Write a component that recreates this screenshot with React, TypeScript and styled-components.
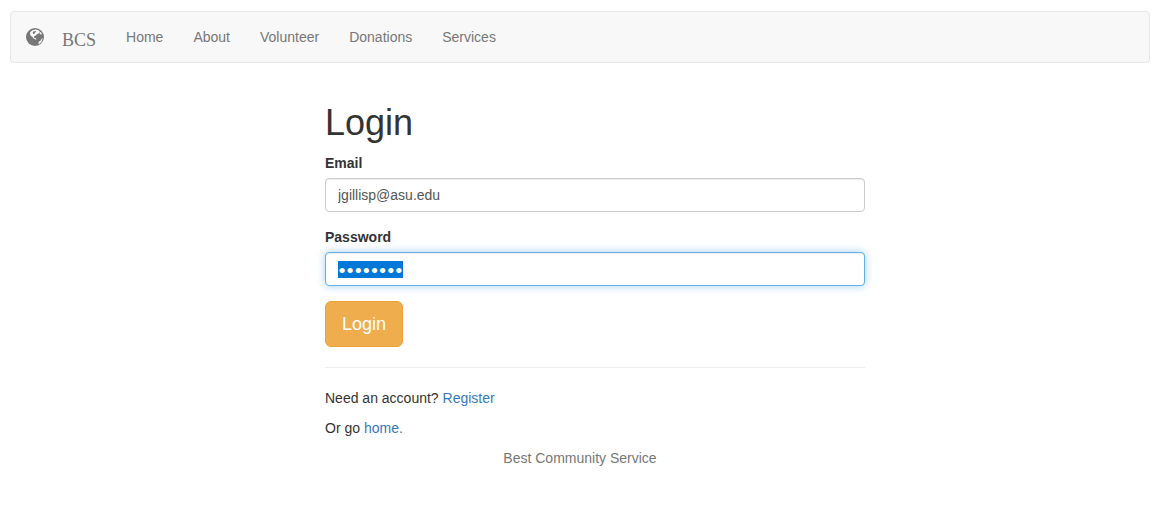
import React, { useEffect, useRef } from "react";
import styled, { createGlobalStyle } from "styled-components";

const GlobalStyle = createGlobalStyle`
  *, *::before, *::after { box-sizing: border-box; }
  body {
    margin: 0;
    background: #fff;
    color: #333;
    font: 14px/20px "Liberation Sans", Arial, sans-serif;
  }
`;

const Page = styled.div`
  padding: 11px 22px 0 10px;
`;

const Navbar = styled.nav`
  display: flex;
  flex-wrap: wrap;
  min-height: 52px;
  margin-bottom: 20px;
  border: 1px solid #e7e7e7;
  border-radius: 4px;
  background: #f8f8f8;
`;

const Brand = styled.a`
  display: flex;
  align-items: flex-start;
  gap: 18px;
  padding: 16px 15px 12px;
  color: #777;
  font-family: "Liberation Serif", "Times New Roman", serif;
  font-size: 18px;
  line-height: 20px;
  text-decoration: none;
`;

const BrandName = styled.span`
  padding-top: 2px;
`;

const NavList = styled.ul`
  display: flex;
  flex-wrap: wrap;
  margin: 0;
  padding: 0;
  list-style: none;
`;

const NavLink = styled.a`
  display: block;
  padding: 15px;
  color: #777;
  text-decoration: none;
`;

const Row = styled.main`
  display: grid;
  grid-template-columns: 1fr 2fr 1fr;
  margin: 0 -15px 0 15px;
`;

const Column = styled.div`
  grid-column: 2;
  padding: 20px 15px 0;
`;

const Title = styled.h1`
  margin: 0 0 10px;
  font-size: 36px;
  font-weight: 500;
  line-height: 40px;
`;

const Field = styled.div`
  margin-bottom: 15px;
`;

const Label = styled.label`
  display: block;
  margin-bottom: 5px;
  font-weight: 700;
`;

const Input = styled.input`
  display: block;
  width: 100%;
  height: 34px;
  padding: 6px 12px;
  border: 1px solid #ccc;
  border-radius: 4px;
  background: #fff;
  box-shadow: inset 0 1px 1px rgba(0, 0, 0, 0.075);
  color: #555;
  font: inherit;

  &:focus {
    border-color: #66afe9;
    outline: 0;
    box-shadow: inset 0 1px 1px rgba(0, 0, 0, 0.075), 0 0 8px rgba(102, 175, 233, 0.6);
  }

  &::selection {
    background: #0078d7;
    color: #fff;
  }
`;

const PasswordInput = styled(Input)`
  font-family: Lato, sans-serif;
`;

const SubmitButton = styled.button`
  display: block;
  height: 46px;
  padding: 10px 16px;
  border: 1px solid #eea236;
  border-radius: 6px;
  background: #f0ad4e;
  color: #fff;
  font: 18px/24px "Liberation Sans", Arial, sans-serif;
  cursor: pointer;
`;

const Divider = styled.hr`
  margin: 20px 0;
  border: 0;
  border-top: 1px solid #eee;
`;

const Text = styled.p`
  margin: 0 0 10px;
`;

const TextLink = styled.a`
  color: #337ab7;
  text-decoration: none;
`;

const Footer = styled.footer`
  color: #777;
  text-align: center;
`;

const navItems = ["Home", "About", "Volunteer", "Donations", "Services"];

function GlobeIcon() {
  return (
    <svg width="18" height="18" viewBox="0 0 18 18" aria-hidden="true">
      <circle cx="9" cy="9" r="9" fill="#777" />
      <path
        fill="#f8f8f8"
        d="M4.200 4 6.400 2.200l3-.8 2.600.5 1.700 1.300-.4 1.500-1 1.100-1.400.5-.9 1.200-1.600.4-.6 1.100.8 1 1.400.2.6 1.100-1.200.2-1.700-.9-1.300-1.600-1.700-1.200L4 6z"
      />
      <path fill="#f8f8f8" d="M13.600 3.400l1.500 1.200.9 1.700-1.300.1-1.200-1.200zM16 10.200l.6.600-.7 2.200-1.400 1.900-1.500 1-.8-.7.9-1.700 1.600-1.100z" />
      <path fill="#777" d="M7.200 3.500 9.600 3l.5 1-1.200.5-.4 1.200-1.300.2-.5-1.100z" />
    </svg>
  );
}

export default function App() {
  const passwordRef = useRef<HTMLInputElement>(null);

  useEffect(() => {
    passwordRef.current?.focus();
    passwordRef.current?.select();
  }, []);

  return (
    <>
      <GlobalStyle />
      <Page>
        <Navbar>
          <Brand href="#">
            <GlobeIcon />
            <BrandName>BCS</BrandName>
          </Brand>
          <NavList>
            {navItems.map((item) => (
              <li key={item}>
                <NavLink href={`#${item.toLowerCase()}`}>{item}</NavLink>
              </li>
            ))}
          </NavList>
        </Navbar>
        <Row>
          <Column>
            <Title>Login</Title>
            <form onSubmit={(event) => event.preventDefault()}>
              <Field>
                <Label htmlFor="email">Email</Label>
                <Input id="email" type="text" name="email" defaultValue="jgillisp@asu.edu" />
              </Field>
              <Field>
                <Label htmlFor="password">Password</Label>
                <PasswordInput
                  id="password"
                  type="password"
                  name="password"
                  defaultValue="password"
                  ref={passwordRef}
                />
              </Field>
              <SubmitButton type="submit">Login</SubmitButton>
            </form>
            <Divider />
            <Text>
              Need an account? <TextLink href="#register">Register</TextLink>
            </Text>
            <Text>
              Or go <TextLink href="#home">home.</TextLink>
            </Text>
          </Column>
        </Row>
        <Footer>Best Community Service</Footer>
      </Page>
    </>
  );
}
